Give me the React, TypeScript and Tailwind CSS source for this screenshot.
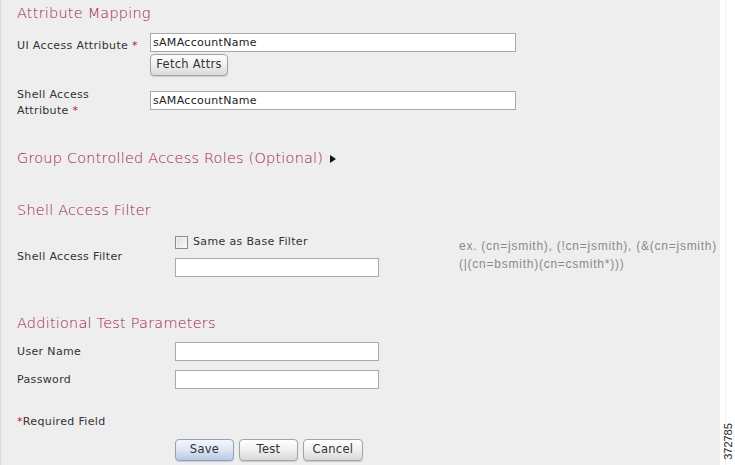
import React from "react";

const headingCls =
  "text-[14.5px] leading-[20px] tracking-[0.2px] text-[#a3174b] font-['DejaVu_Sans',sans-serif] font-light";
const labelCls =
  "text-[11px] leading-[16px] tracking-[0.35px] text-[#333333] font-['DejaVu_Sans',sans-serif]";
const inputCls =
  "block h-[19px] border border-[#a9a9a9] bg-white px-[2px] text-[11px] leading-[17px] tracking-[0.3px] text-[#222] font-['DejaVu_Sans',sans-serif] outline-none";
const btnCls =
  "h-[22px] rounded-[4px] border border-[#a3a3a3] bg-gradient-to-b from-[#fefefe] via-[#f0f0f0] to-[#d9d9d9] text-[11.5px] tracking-[0.3px] text-[#333] font-['DejaVu_Sans',sans-serif] shadow-[0_1px_1px_rgba(0,0,0,0.15)]";

function Star() {
  return <span className="text-[#c4123f]">*</span>;
}

export default function App() {
  return (
    <div className="flex w-[735px] h-[465px] bg-white overflow-hidden">
      <div className="w-[720px] shrink-0 h-[465px] bg-[#eeeeee] border-l border-[#dcdcdc] pl-[16px] pt-[3px] flex flex-col">
        <div className={headingCls}>Attribute Mapping</div>

        {/* UI Access Attribute */}
        <div className="flex mt-[10px]">
          <div className={`${labelCls} w-[133px] shrink-0 pt-[5px]`}>
            UI Access Attribute <Star />
          </div>
          <div className="flex flex-col items-start">
            <input className={`${inputCls} w-[366px]`} defaultValue="sAMAccountName" readOnly />
            <button className={`${btnCls} mt-[2px] w-[78px] h-[20px]`}>Fetch Attrs</button>
          </div>
        </div>

        {/* Shell Access Attribute */}
        <div className="flex mt-[11px]">
          <div className={`${labelCls} w-[133px] shrink-0`}>
            Shell Access
            <br />
            Attribute <Star />
          </div>
          <div className="pt-[4px]">
            <input className={`${inputCls} w-[366px]`} defaultValue="sAMAccountName" readOnly />
          </div>
        </div>

        <div className={`${headingCls} mt-[29px] flex items-center`}>
          Group Controlled Access Roles (Optional)
          <svg width="6" height="8" viewBox="0 0 6 8" className="ml-[7px] mt-[1px]">
            <path d="M0 0 L6 4 L0 8 Z" fill="#111" />
          </svg>
        </div>

        <div className={`${headingCls} mt-[32px]`}>Shell Access Filter</div>

        {/* Shell Access Filter row */}
        <div className="flex items-center mt-[13px]">
          <div className={`${labelCls} w-[158px] shrink-0 mt-[3px]`}>Shell Access Filter</div>
          <div className="w-[284px] shrink-0 flex flex-col">
            <div className="h-[18px] flex items-center">
              <span className="w-[13px] h-[13px] border border-[#8c8c8c] bg-gradient-to-br from-[#dcdcdc] to-[#fbfbfb] shadow-[inset_0_0_0_1px_#f4f4f4]" />
              <span className={`${labelCls} ml-[5px]`}>Same as Base Filter</span>
            </div>
            <input className={`${inputCls} w-[204px] mt-[7px]`} readOnly />
          </div>
          <div className="whitespace-nowrap text-[12px] leading-[18px] tracking-[0.75px] text-[#8a8a8a] font-['Liberation_Sans',Arial,sans-serif]">
            ex. (cn=jsmith), (!cn=jsmith), (&amp;(cn=jsmith)
            <br />
            (|(cn=bsmith)(cn=csmith*)))
          </div>
        </div>

        <div className={`${headingCls} mt-[36px]`}>Additional Test Parameters</div>

        <div className="flex items-center mt-[9px]">
          <div className={`${labelCls} w-[158px] shrink-0`}>User Name</div>
          <input className={`${inputCls} w-[204px]`} readOnly />
        </div>
        <div className="flex items-center mt-[9px]">
          <div className={`${labelCls} w-[158px] shrink-0`}>Password</div>
          <input className={`${inputCls} w-[204px]`} type="password" readOnly />
        </div>

        <div className={`${labelCls} mt-[25px]`}>
          <Star />
          Required Field
        </div>

        <div className="flex mt-[9px] pl-[158px] gap-[5px]">
          <button className="h-[22px] w-[59px] rounded-[4px] border border-[#8ea2bf] bg-gradient-to-b from-[#f4f7fc] via-[#dde6f3] to-[#b8cae4] text-[11.5px] tracking-[0.3px] text-[#333] font-['DejaVu_Sans',sans-serif] shadow-[0_1px_1px_rgba(0,0,0,0.15)]">
            Save
          </button>
          <button className={`${btnCls} w-[59px]`}>Test</button>
          <button className={`${btnCls} w-[60px]`}>Cancel</button>
        </div>
      </div>
      <div className="flex-1 relative border-l border-[#f2f2f2] ml-[5px]">
        <div className="absolute left-[-5px] top-[419px] w-[15px] h-[44px] flex items-center justify-center">
          <span className="block -rotate-90 whitespace-nowrap text-[11px] leading-[11px] text-[#222] font-['Liberation_Sans',Arial,sans-serif]">
            372785
          </span>
        </div>
      </div>
    </div>
  );
}
